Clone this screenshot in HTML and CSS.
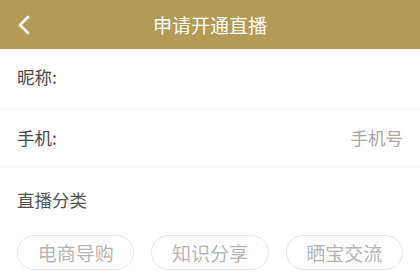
FILE: index.html
```html
<!DOCTYPE html>
<html lang="zh">
<head>
<meta charset="utf-8">
<link rel="stylesheet" href="styles.css">
</head>
<body>
<div class="page">
  <header class="topbar">
    <span class="back">
      <svg width="14" height="20" viewBox="0 0 14 20"><polyline points="11,2 3,10 11,18" fill="none" stroke="#fff" stroke-width="2.6" stroke-linecap="round" stroke-linejoin="round"/></svg>
    </span>
    <h1 class="title">申请开通直播</h1>
  </header>
  <div class="row row-first">
    <span class="label">昵称:</span>
  </div>
  <div class="row row-second">
    <span class="label">手机:</span>
    <span class="placeholder">手机号</span>
  </div>
  <section class="category">
    <div class="cat-label">直播分类</div>
    <div class="chips">
      <span class="chip">电商导购</span>
      <span class="chip">知识分享</span>
      <span class="chip">晒宝交流</span>
    </div>
  </section>
</div>
</body>
</html>
```
FILE: styles.css
```css
* { box-sizing: border-box; margin: 0; padding: 0; }
html, body { width: 420px; height: 280px; overflow: hidden; background: #fff; }
body { font-family: "Noto Sans CJK SC", "Noto Sans", sans-serif; }
.page { display: flex; flex-direction: column; }
.topbar {
  height: 49px;
  background: #b39a56;
  display: flex;
  align-items: center;
  justify-content: center;
  position: relative;
}
.back { position: absolute; left: 17px; top: 15px; display: flex; }
.title { font-size: 19px; font-weight: 400; color: #fff; line-height: 1; }
.row {
  display: flex;
  align-items: center;
  justify-content: space-between;
  padding: 0 17px;
  border-bottom: 3px solid #f8f8f8;
}
.row-first { height: 61px; padding-bottom: 3px; }
.row-second { height: 58px; }
.label { font-size: 17.5px; color: #4a4a4a; }
.placeholder { font-size: 17.5px; color: #a8a8a8; }
.category { padding: 22px 17px 0; }
.cat-label { font-size: 17.5px; color: #555; line-height: 20px; }
.chips {
  margin-top: 25px;
  display: grid;
  grid-template-columns: repeat(3, 1fr);
  column-gap: 17px;
}
.chip {
  height: 35px;
  border: 1px solid #e6e6e6;
  border-radius: 18px;
  display: flex;
  align-items: center;
  justify-content: center;
  font-size: 19px;
  color: #b5b5b5;
}
```
